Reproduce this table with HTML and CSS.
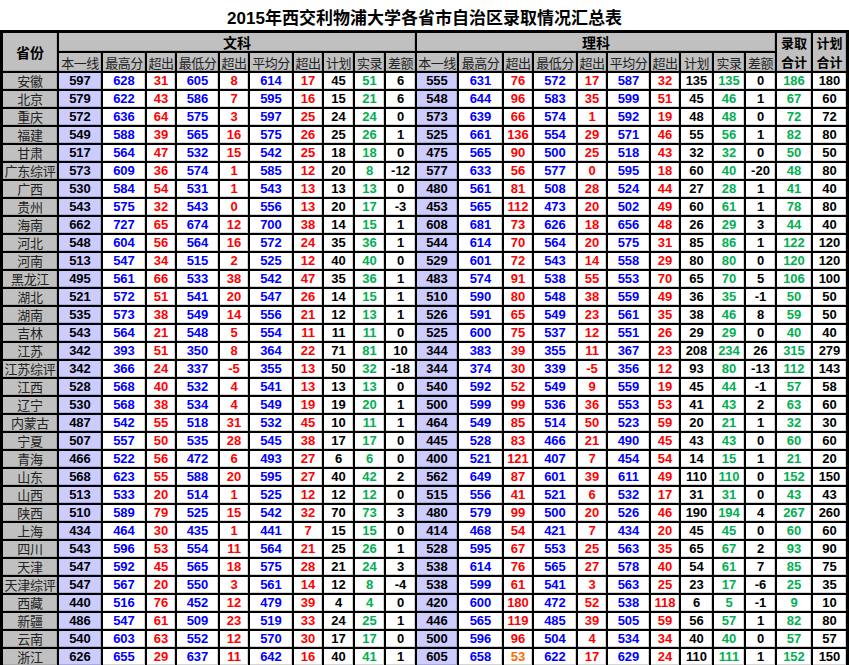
FILE: index.html
```html
<!DOCTYPE html>
<html lang="zh-CN">
<head>
<meta charset="utf-8">
<title>2015年西交利物浦大学各省市自治区录取情况汇总表</title>
<link rel="stylesheet" href="styles.css">
</head>
<body>
<div class="title">2015年西交利物浦大学各省市自治区录取情况汇总表</div>
<table class="sheet">
<colgroup>
<col style="width:54px"><col style="width:42px"><col style="width:42px"><col style="width:28px"><col style="width:41px"><col style="width:28px"><col style="width:42px"><col style="width:28px"><col style="width:29px"><col style="width:29px"><col style="width:29px"><col style="width:40px"><col style="width:43px"><col style="width:28px"><col style="width:42px"><col style="width:28px"><col style="width:41px"><col style="width:28px"><col style="width:31px"><col style="width:30px"><col style="width:29px"><col style="width:34px"><col style="width:33px">
</colgroup>
<thead>
<tr class="hr1"><th rowspan="2" class="hb prov">省份</th><th colspan="10" class="hb">文科</th><th colspan="10" class="hb">理科</th><th rowspan="2" class="hb two">录取<br>合计</th><th rowspan="2" class="hb two">计划<br>合计</th></tr>
<tr class="hr2"><th>本一线</th><th>最高分</th><th>超出</th><th>最低分</th><th>超出</th><th>平均分</th><th>超出</th><th>计划</th><th>实录</th><th>差额</th><th>本一线</th><th>最高分</th><th>超出</th><th>最低分</th><th>超出</th><th>平均分</th><th>超出</th><th>计划</th><th>实录</th><th>差额</th></tr>
</thead>
<tbody>
<tr><th>安徽</th><td>597</td><td>628</td><td>31</td><td>605</td><td>8</td><td>614</td><td>17</td><td>45</td><td>51</td><td>6</td><td>555</td><td>631</td><td>76</td><td>572</td><td>17</td><td>587</td><td>32</td><td>135</td><td>135</td><td>0</td><td>186</td><td>180</td></tr>
<tr><th>北京</th><td>579</td><td>622</td><td>43</td><td>586</td><td>7</td><td>595</td><td>16</td><td>15</td><td>21</td><td>6</td><td>548</td><td>644</td><td>96</td><td>583</td><td>35</td><td>599</td><td>51</td><td>45</td><td>46</td><td>1</td><td>67</td><td>60</td></tr>
<tr><th>重庆</th><td>572</td><td>636</td><td>64</td><td>575</td><td>3</td><td>597</td><td>25</td><td>24</td><td>24</td><td>0</td><td>573</td><td>639</td><td>66</td><td>574</td><td>1</td><td>592</td><td>19</td><td>48</td><td>48</td><td>0</td><td>72</td><td>72</td></tr>
<tr><th>福建</th><td>549</td><td>588</td><td>39</td><td>565</td><td>16</td><td>575</td><td>26</td><td>25</td><td>26</td><td>1</td><td>525</td><td>661</td><td>136</td><td>554</td><td>29</td><td>571</td><td>46</td><td>55</td><td>56</td><td>1</td><td>82</td><td>80</td></tr>
<tr><th>甘肃</th><td>517</td><td>564</td><td>47</td><td>532</td><td>15</td><td>542</td><td>25</td><td>18</td><td>18</td><td>0</td><td>475</td><td>565</td><td>90</td><td>500</td><td>25</td><td>518</td><td>43</td><td>32</td><td>32</td><td>0</td><td>50</td><td>50</td></tr>
<tr><th>广东综评</th><td>573</td><td>609</td><td>36</td><td>574</td><td>1</td><td>585</td><td>12</td><td>20</td><td>8</td><td>-12</td><td>577</td><td>633</td><td>56</td><td>577</td><td>0</td><td>595</td><td>18</td><td>60</td><td>40</td><td>-20</td><td>48</td><td>80</td></tr>
<tr><th>广西</th><td>530</td><td>584</td><td>54</td><td>531</td><td>1</td><td>543</td><td>13</td><td>13</td><td>13</td><td>0</td><td>480</td><td>561</td><td>81</td><td>508</td><td>28</td><td>524</td><td>44</td><td>27</td><td>28</td><td>1</td><td>41</td><td>40</td></tr>
<tr><th>贵州</th><td>543</td><td>575</td><td>32</td><td>543</td><td>0</td><td>556</td><td>13</td><td>20</td><td>17</td><td>-3</td><td>453</td><td>565</td><td>112</td><td>473</td><td>20</td><td>502</td><td>49</td><td>60</td><td>61</td><td>1</td><td>78</td><td>80</td></tr>
<tr><th>海南</th><td>662</td><td>727</td><td>65</td><td>674</td><td>12</td><td>700</td><td>38</td><td>14</td><td>15</td><td>1</td><td>608</td><td>681</td><td>73</td><td>626</td><td>18</td><td>656</td><td>48</td><td>26</td><td>29</td><td>3</td><td>44</td><td>40</td></tr>
<tr><th>河北</th><td>548</td><td>604</td><td>56</td><td>564</td><td>16</td><td>572</td><td>24</td><td>35</td><td>36</td><td>1</td><td>544</td><td>614</td><td>70</td><td>564</td><td>20</td><td>575</td><td>31</td><td>85</td><td>86</td><td>1</td><td>122</td><td>120</td></tr>
<tr><th>河南</th><td>513</td><td>547</td><td>34</td><td>515</td><td>2</td><td>525</td><td>12</td><td>40</td><td>40</td><td>0</td><td>529</td><td>601</td><td>72</td><td>543</td><td>14</td><td>558</td><td>29</td><td>80</td><td>80</td><td>0</td><td>120</td><td>120</td></tr>
<tr><th>黑龙江</th><td>495</td><td>561</td><td>66</td><td>533</td><td>38</td><td>542</td><td>47</td><td>35</td><td>36</td><td>1</td><td>483</td><td>574</td><td>91</td><td>538</td><td>55</td><td>553</td><td>70</td><td>65</td><td>70</td><td>5</td><td>106</td><td>100</td></tr>
<tr><th>湖北</th><td>521</td><td>572</td><td>51</td><td>541</td><td>20</td><td>547</td><td>26</td><td>14</td><td>15</td><td>1</td><td>510</td><td>590</td><td>80</td><td>548</td><td>38</td><td>559</td><td>49</td><td>36</td><td>35</td><td>-1</td><td>50</td><td>50</td></tr>
<tr><th>湖南</th><td>535</td><td>573</td><td>38</td><td>549</td><td>14</td><td>556</td><td>21</td><td>12</td><td>13</td><td>1</td><td>526</td><td>591</td><td>65</td><td>549</td><td>23</td><td>561</td><td>35</td><td>38</td><td>46</td><td>8</td><td>59</td><td>50</td></tr>
<tr><th>吉林</th><td>543</td><td>564</td><td>21</td><td>548</td><td>5</td><td>554</td><td>11</td><td>11</td><td>11</td><td>0</td><td>525</td><td>600</td><td>75</td><td>537</td><td>12</td><td>551</td><td>26</td><td>29</td><td>29</td><td>0</td><td>40</td><td>40</td></tr>
<tr><th>江苏</th><td>342</td><td>393</td><td>51</td><td>350</td><td>8</td><td>364</td><td>22</td><td>71</td><td>81</td><td>10</td><td>344</td><td>383</td><td>39</td><td>355</td><td>11</td><td>367</td><td>23</td><td>208</td><td>234</td><td>26</td><td>315</td><td>279</td></tr>
<tr><th>江苏综评</th><td>342</td><td>366</td><td>24</td><td>337</td><td>-5</td><td>355</td><td>13</td><td>50</td><td>32</td><td>-18</td><td>344</td><td>374</td><td>30</td><td>339</td><td>-5</td><td>356</td><td>12</td><td>93</td><td>80</td><td>-13</td><td>112</td><td>143</td></tr>
<tr><th>江西</th><td>528</td><td>568</td><td>40</td><td>532</td><td>4</td><td>541</td><td>13</td><td>13</td><td>13</td><td>0</td><td>540</td><td>592</td><td>52</td><td>549</td><td>9</td><td>559</td><td>19</td><td>45</td><td>44</td><td>-1</td><td>57</td><td>58</td></tr>
<tr><th>辽宁</th><td>530</td><td>568</td><td>38</td><td>534</td><td>4</td><td>549</td><td>19</td><td>19</td><td>20</td><td>1</td><td>500</td><td>599</td><td>99</td><td>536</td><td>36</td><td>553</td><td>53</td><td>41</td><td>43</td><td>2</td><td>63</td><td>60</td></tr>
<tr><th>内蒙古</th><td>487</td><td>542</td><td>55</td><td>518</td><td>31</td><td>532</td><td>45</td><td>10</td><td>11</td><td>1</td><td>464</td><td>549</td><td>85</td><td>514</td><td>50</td><td>523</td><td>59</td><td>20</td><td>21</td><td>1</td><td>32</td><td>30</td></tr>
<tr><th>宁夏</th><td>507</td><td>557</td><td>50</td><td>535</td><td>28</td><td>545</td><td>38</td><td>17</td><td>17</td><td>0</td><td>445</td><td>528</td><td>83</td><td>466</td><td>21</td><td>490</td><td>45</td><td>43</td><td>43</td><td>0</td><td>60</td><td>60</td></tr>
<tr><th>青海</th><td>466</td><td>522</td><td>56</td><td>472</td><td>6</td><td>493</td><td>27</td><td>6</td><td>6</td><td>0</td><td>400</td><td>521</td><td>121</td><td>407</td><td>7</td><td>454</td><td>54</td><td>14</td><td>15</td><td>1</td><td>21</td><td>20</td></tr>
<tr><th>山东</th><td>568</td><td>623</td><td>55</td><td>588</td><td>20</td><td>595</td><td>27</td><td>40</td><td>42</td><td>2</td><td>562</td><td>649</td><td>87</td><td>601</td><td>39</td><td>611</td><td>49</td><td>110</td><td>110</td><td>0</td><td>152</td><td>150</td></tr>
<tr><th>山西</th><td>513</td><td>533</td><td>20</td><td>514</td><td>1</td><td>525</td><td>12</td><td>12</td><td>12</td><td>0</td><td>515</td><td>556</td><td>41</td><td>521</td><td>6</td><td>532</td><td>17</td><td>31</td><td>31</td><td>0</td><td>43</td><td>43</td></tr>
<tr><th>陕西</th><td>510</td><td>589</td><td>79</td><td>525</td><td>15</td><td>542</td><td>32</td><td>70</td><td>73</td><td>3</td><td>480</td><td>579</td><td>99</td><td>500</td><td>20</td><td>526</td><td>46</td><td>190</td><td>194</td><td>4</td><td>267</td><td>260</td></tr>
<tr><th>上海</th><td>434</td><td>464</td><td>30</td><td>435</td><td>1</td><td>441</td><td>7</td><td>15</td><td>15</td><td>0</td><td>414</td><td>468</td><td>54</td><td>421</td><td>7</td><td>434</td><td>20</td><td>45</td><td>45</td><td>0</td><td>60</td><td>60</td></tr>
<tr><th>四川</th><td>543</td><td>596</td><td>53</td><td>554</td><td>11</td><td>564</td><td>21</td><td>25</td><td>26</td><td>1</td><td>528</td><td>595</td><td>67</td><td>553</td><td>25</td><td>563</td><td>35</td><td>65</td><td>67</td><td>2</td><td>93</td><td>90</td></tr>
<tr><th>天津</th><td>547</td><td>592</td><td>45</td><td>565</td><td>18</td><td>575</td><td>28</td><td>21</td><td>24</td><td>3</td><td>538</td><td>614</td><td>76</td><td>565</td><td>27</td><td>578</td><td>40</td><td>54</td><td>61</td><td>7</td><td>85</td><td>75</td></tr>
<tr><th>天津综评</th><td>547</td><td>567</td><td>20</td><td>550</td><td>3</td><td>561</td><td>14</td><td>12</td><td>8</td><td>-4</td><td>538</td><td>599</td><td>61</td><td>541</td><td>3</td><td>563</td><td>25</td><td>23</td><td>17</td><td>-6</td><td>25</td><td>35</td></tr>
<tr><th>西藏</th><td>440</td><td>516</td><td>76</td><td>452</td><td>12</td><td>479</td><td>39</td><td>4</td><td>4</td><td>0</td><td>420</td><td>600</td><td>180</td><td>472</td><td>52</td><td>538</td><td>118</td><td>6</td><td>5</td><td>-1</td><td>9</td><td>10</td></tr>
<tr><th>新疆</th><td>486</td><td>547</td><td>61</td><td>509</td><td>23</td><td>519</td><td>33</td><td>24</td><td>25</td><td>1</td><td>446</td><td>565</td><td>119</td><td>485</td><td>39</td><td>505</td><td>59</td><td>56</td><td>57</td><td>1</td><td>82</td><td>80</td></tr>
<tr><th>云南</th><td>540</td><td>603</td><td>63</td><td>552</td><td>12</td><td>570</td><td>30</td><td>17</td><td>17</td><td>0</td><td>500</td><td>596</td><td>96</td><td>504</td><td>4</td><td>534</td><td>34</td><td>40</td><td>40</td><td>0</td><td>57</td><td>57</td></tr>
<tr><th>浙江</th><td>626</td><td>655</td><td>29</td><td>637</td><td>11</td><td>642</td><td>16</td><td>40</td><td>41</td><td>1</td><td>605</td><td>658</td><td class="orange">53</td><td>622</td><td>17</td><td>629</td><td>24</td><td>110</td><td>111</td><td>1</td><td>152</td><td>150</td></tr>
</tbody>
</table>
</body>
</html>
```
FILE: styles.css
```css
html, body {
  margin: 0;
  padding: 0;
  background: #fff;
}

body {
  font-family: "Liberation Sans", "Noto Sans CJK SC", sans-serif;
  width: 849px;
}

.title {
  height: 30px;
  box-sizing: border-box;
  padding-top: 9px;
  line-height: 20px;
  text-align: center;
  font-size: 17px;
  font-weight: bold;
  color: #000;
  white-space: nowrap;
}

.sheet {
  table-layout: fixed;
  width: 849px;
  border-collapse: separate;
  border-spacing: 2px;
  border: 1px solid #000;
  background: #000;
}

.sheet th,
.sheet td {
  padding: 0;
  text-align: center;
  vertical-align: middle;
  white-space: nowrap;
  box-shadow: inset -1px -1px 0 #d4d4d4;
}

.sheet thead th {
  background: #c0c0c0;
  font-family: "Noto Sans CJK SC", sans-serif;
  font-weight: normal;
  font-size: 13px;
  color: #222;
  box-shadow: inset -1px -1px 0 #a8a8a8;
}

.sheet .hr1 th {
  height: 17px;
  line-height: 17px;
}

.sheet .hr2 th {
  height: 17px;
  line-height: 17px;
  letter-spacing: -0.5px;
}

.sheet thead th.hb {
  font-weight: bold;
  font-size: 14px;
  color: #000;
}

.sheet thead th.two {
  font-size: 13px;
  line-height: 19px;
}

.sheet tbody th {
  height: 16px;
  line-height: 16px;
  background: #c0c0c0;
  font-family: "Noto Sans CJK SC", sans-serif;
  font-weight: normal;
  font-size: 13px;
  color: #222;
  letter-spacing: -0.3px;
  box-shadow: inset -1px -1px 0 #a8a8a8;
}

.sheet tbody td {
  height: 16px;
  line-height: 16px;
  background: #fff;
  font-family: "Liberation Sans", sans-serif;
  font-weight: bold;
  font-size: 13px;
  color: #000;
}

/* 本一线 columns */
.sheet tbody td:nth-child(2),
.sheet tbody td:nth-child(12) {
  background: #ccccff;
  box-shadow: inset -1px -1px 0 #a9a9d8;
}

/* 最高分 / 最低分 / 平均分 */
.sheet tbody td:nth-child(3),
.sheet tbody td:nth-child(5),
.sheet tbody td:nth-child(7),
.sheet tbody td:nth-child(13),
.sheet tbody td:nth-child(15),
.sheet tbody td:nth-child(17) {
  color: #0000ff;
}

/* 超出 */
.sheet tbody td:nth-child(4),
.sheet tbody td:nth-child(6),
.sheet tbody td:nth-child(8),
.sheet tbody td:nth-child(14),
.sheet tbody td:nth-child(16),
.sheet tbody td:nth-child(18) {
  color: #ff0000;
}

/* 实录 / 录取合计 */
.sheet tbody td:nth-child(10),
.sheet tbody td:nth-child(20),
.sheet tbody td:nth-child(22) {
  color: #00b050;
}

.sheet tbody td.orange {
  color: #ff6a00;
}
```
